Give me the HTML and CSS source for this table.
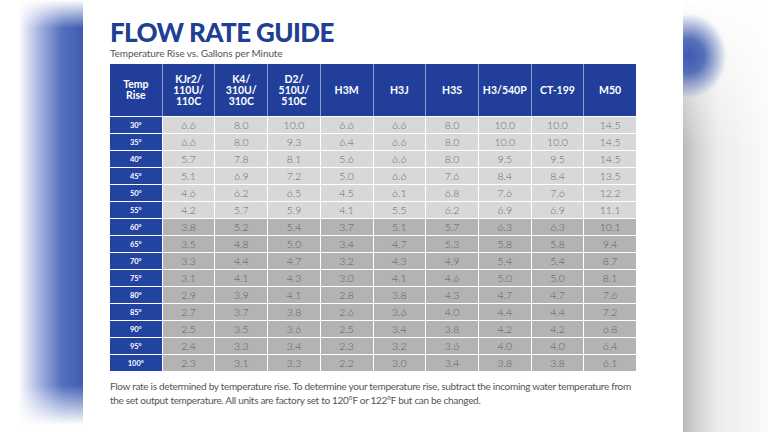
FILE: index.html
```html
<!DOCTYPE html>
<html lang="en">
<head>
<meta charset="utf-8">
<title>Flow Rate Guide</title>
<link rel="stylesheet" href="styles.css">
</head>
<body>
<div class="page">
  <div class="side side-left"></div>
  <main class="panel">
    <h1 class="title">FLOW RATE GUIDE</h1>
    <p class="subtitle">Temperature Rise vs. Gallons per Minute</p>
    <div class="chart">
      <div class="head">
        <div class="hc">Temp<br>Rise</div>
        <div class="hc">KJr2/<br>110U/<br>110C</div>
        <div class="hc">K4/<br>310U/<br>310C</div>
        <div class="hc">D2/<br>510U/<br>510C</div>
        <div class="hc">H3M</div>
        <div class="hc">H3J</div>
        <div class="hc">H3S</div>
        <div class="hc">H3/540P</div>
        <div class="hc">CT-199</div>
        <div class="hc">M50</div>
      </div>
      <div class="body">
        <div class="row"><div class="rc">30°</div><div class="c">6.6</div><div class="c">8.0</div><div class="c">10.0</div><div class="c">6.6</div><div class="c">6.6</div><div class="c">8.0</div><div class="c">10.0</div><div class="c">10.0</div><div class="c">14.5</div></div>
        <div class="row"><div class="rc">35°</div><div class="c">6.6</div><div class="c">8.0</div><div class="c">9.3</div><div class="c">6.4</div><div class="c">6.6</div><div class="c">8.0</div><div class="c">10.0</div><div class="c">10.0</div><div class="c">14.5</div></div>
        <div class="row"><div class="rc">40°</div><div class="c">5.7</div><div class="c">7.8</div><div class="c">8.1</div><div class="c">5.6</div><div class="c">6.6</div><div class="c">8.0</div><div class="c">9.5</div><div class="c">9.5</div><div class="c">14.5</div></div>
        <div class="row"><div class="rc">45°</div><div class="c">5.1</div><div class="c">6.9</div><div class="c">7.2</div><div class="c">5.0</div><div class="c">6.6</div><div class="c">7.6</div><div class="c">8.4</div><div class="c">8.4</div><div class="c">13.5</div></div>
        <div class="row"><div class="rc">50°</div><div class="c">4.6</div><div class="c">6.2</div><div class="c">6.5</div><div class="c">4.5</div><div class="c">6.1</div><div class="c">6.8</div><div class="c">7.6</div><div class="c">7.6</div><div class="c">12.2</div></div>
        <div class="row"><div class="rc">55°</div><div class="c">4.2</div><div class="c">5.7</div><div class="c">5.9</div><div class="c">4.1</div><div class="c">5.5</div><div class="c">6.2</div><div class="c">6.9</div><div class="c">6.9</div><div class="c">11.1</div></div>
        <div class="row dark"><div class="rc">60°</div><div class="c">3.8</div><div class="c">5.2</div><div class="c">5.4</div><div class="c">3.7</div><div class="c">5.1</div><div class="c">5.7</div><div class="c">6.3</div><div class="c">6.3</div><div class="c">10.1</div></div>
        <div class="row dark"><div class="rc">65°</div><div class="c">3.5</div><div class="c">4.8</div><div class="c">5.0</div><div class="c">3.4</div><div class="c">4.7</div><div class="c">5.3</div><div class="c">5.8</div><div class="c">5.8</div><div class="c">9.4</div></div>
        <div class="row dark"><div class="rc">70°</div><div class="c">3.3</div><div class="c">4.4</div><div class="c">4.7</div><div class="c">3.2</div><div class="c">4.3</div><div class="c">4.9</div><div class="c">5.4</div><div class="c">5.4</div><div class="c">8.7</div></div>
        <div class="row dark"><div class="rc">75°</div><div class="c">3.1</div><div class="c">4.1</div><div class="c">4.3</div><div class="c">3.0</div><div class="c">4.1</div><div class="c">4.6</div><div class="c">5.0</div><div class="c">5.0</div><div class="c">8.1</div></div>
        <div class="row dark"><div class="rc">80°</div><div class="c">2.9</div><div class="c">3.9</div><div class="c">4.1</div><div class="c">2.8</div><div class="c">3.8</div><div class="c">4.3</div><div class="c">4.7</div><div class="c">4.7</div><div class="c">7.6</div></div>
        <div class="row dark"><div class="rc">85°</div><div class="c">2.7</div><div class="c">3.7</div><div class="c">3.8</div><div class="c">2.6</div><div class="c">3.6</div><div class="c">4.0</div><div class="c">4.4</div><div class="c">4.4</div><div class="c">7.2</div></div>
        <div class="row dark"><div class="rc">90°</div><div class="c">2.5</div><div class="c">3.5</div><div class="c">3.6</div><div class="c">2.5</div><div class="c">3.4</div><div class="c">3.8</div><div class="c">4.2</div><div class="c">4.2</div><div class="c">6.8</div></div>
        <div class="row dark"><div class="rc">95°</div><div class="c">2.4</div><div class="c">3.3</div><div class="c">3.4</div><div class="c">2.3</div><div class="c">3.2</div><div class="c">3.6</div><div class="c">4.0</div><div class="c">4.0</div><div class="c">6.4</div></div>
        <div class="row dark"><div class="rc">100°</div><div class="c">2.3</div><div class="c">3.1</div><div class="c">3.3</div><div class="c">2.2</div><div class="c">3.0</div><div class="c">3.4</div><div class="c">3.8</div><div class="c">3.8</div><div class="c">6.1</div></div>
      </div>
    </div>
    <p class="note">Flow rate is determined by temperature rise. To determine your temperature rise, subtract the incoming water temperature from the set output temperature. All units are factory set to 120°F or 122°F but can be changed.</p>
  </main>
  <div class="side side-right"></div>
</div>
</body>
</html>
```

FILE: styles.css
```css
* { box-sizing: border-box; }

html, body {
  margin: 0;
  padding: 0;
  background: #fff;
}

body {
  font-family: "Lato", "Open Sans", sans-serif;
}

.page {
  display: flex;
  width: 768px;
  height: 432px;
  overflow: hidden;
}

.side {
  flex: none;
  height: 432px;
}

.side-left {
  width: 83px;
  background:
    linear-gradient(to bottom, #fff 0, rgba(255,255,255,0) 28px, rgba(255,255,255,0) 385px, #fff 425px),
    linear-gradient(to right, #fff 0, #fff 18px, #9aaadb 42px, #5470bd 62px, #3e5cb1 83px);
}

.side-right {
  width: 85px;
  background:
    radial-gradient(ellipse 38px 42px at 6px 56px, #3d5ab0 0, rgba(61,90,176,0.85) 40%, rgba(61,90,176,0) 100%),
    linear-gradient(to bottom, #fff 0, rgba(255,255,255,0) 150px),
    linear-gradient(to right, #b9b9bb 0, #d2d2d4 14px, #ececee 35px, #fafafa 84px);
}

.panel {
  flex: none;
  width: 600px;
  padding: 19px 0 0 27px;
  background: #fff;
}

.title {
  margin: 0;
  font-size: 26px;
  line-height: 26px;
  font-weight: 900;
  color: #1f3f94;
  letter-spacing: -0.6px;
}

.subtitle {
  margin: 2px 0 5px;
  font-size: 10px;
  line-height: 12px;
  color: #555;
  letter-spacing: -0.1px;
}

.chart {
  width: 526px;
}

.head {
  display: grid;
  grid-template-columns: repeat(10, 1fr);
  column-gap: 1px;
  height: 52px;
  background: #8c9dd3;
}

.hc {
  display: flex;
  align-items: center;
  justify-content: center;
  text-align: center;
  background: #213f9a;
  color: #fff;
  font-weight: 700;
  font-size: 10.5px;
  line-height: 11px;
}

.body {
  display: grid;
  grid-template-columns: repeat(10, 1fr);
  grid-auto-rows: 16px;
  gap: 1px;
  margin-top: 1px;
  background: #fff;
}

.row { display: contents; }

.rc {
  display: flex;
  align-items: center;
  justify-content: center;
  background: #2343a0;
  color: #fff;
  font-weight: 700;
  font-size: 7.5px;
}

.c {
  display: flex;
  align-items: center;
  justify-content: center;
  background: #d8d8d8;
  color: #6a6a6a;
  font-weight: 300;
  font-size: 10.5px;
}

.dark .c {
  background: #b3b3b3;
  color: #5e5e5e;
}

.note {
  margin: 8px 0 0;
  width: 530px;
  font-size: 10px;
  line-height: 14px;
  letter-spacing: -0.3px;
  color: #555;
}
```
